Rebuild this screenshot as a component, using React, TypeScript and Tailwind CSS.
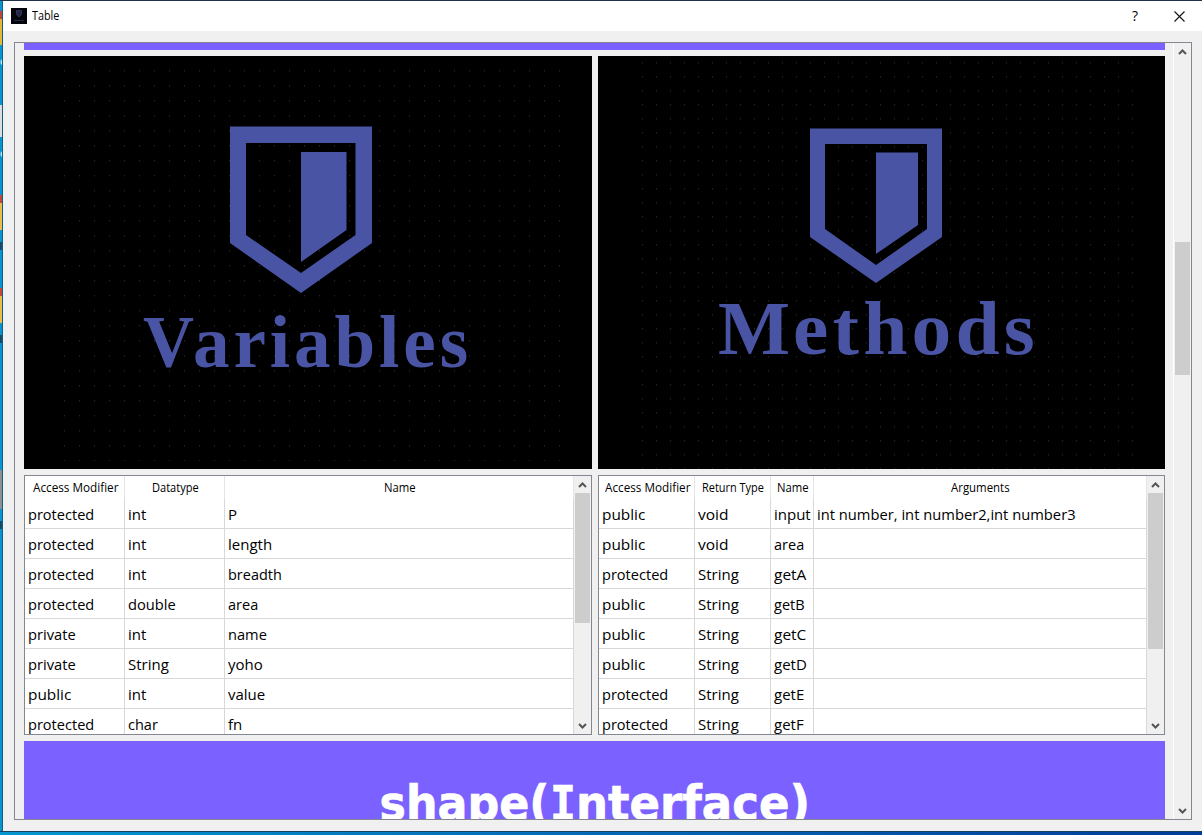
import React from "react";

const variables = [
  ["protected", "int", "P"],
  ["protected", "int", "length"],
  ["protected", "int", "breadth"],
  ["protected", "double", "area"],
  ["private", "int", "name"],
  ["private", "String", "yoho"],
  ["public", "int", "value"],
  ["protected", "char", "fn"],
];

const methods = [
  ["public", "void", "input", "int number, int number2,int number3"],
  ["public", "void", "area", ""],
  ["protected", "String", "getA", ""],
  ["public", "String", "getB", ""],
  ["public", "String", "getC", ""],
  ["public", "String", "getD", ""],
  ["protected", "String", "getE", ""],
  ["protected", "String", "getF", ""],
];

const cellWidths: Record<string, number> = {
  protected: 66, private: 48, public: 43, int: 18, double: 48, String: 41, char: 30,
  P: 9, length: 44, breadth: 54, area: 30, name: 39, yoho: 35, value: 37, fn: 14,
  void: 30, input: 37, getA: 32, getB: 31, getC: 32, getD: 33, getE: 30, getF: 30,
  "int number, int number2,int number3": 259,
};

function Arrow({ down = false }: { down?: boolean }) {
  return (
    <svg width="9" height="6" viewBox="0 0 9 6" className={down ? "rotate-180" : ""}>
      <path d="M1 5 L4.5 1.5 L8 5" fill="none" stroke="#555" strokeWidth="2" />
    </svg>
  );
}

function ScrollBar({ thumb }: { thumb: string }) {
  return (
    <div className="flex w-[17px] shrink-0 flex-col items-center bg-[#f0f0f0]">
      <div className="flex h-[17px] shrink-0 items-center justify-center"><Arrow /></div>
      <div className={"w-[15px] shrink-0 bg-[#cdcdcd] " + thumb} />
      <div className="flex-1" />
      <div className="flex h-[17px] shrink-0 items-center justify-center"><Arrow down /></div>
    </div>
  );
}

function Label({ text, width, size }: { text: string; width: number; size: number }) {
  const ref = React.useRef<HTMLSpanElement>(null);
  const [scale, setScale] = React.useState(1);
  React.useLayoutEffect(() => {
    if (ref.current) setScale(width / ref.current.offsetWidth);
  }, [width]);
  return (
    <span className="block whitespace-nowrap leading-none text-black" style={{ width, fontSize: size }}>
      <span ref={ref} className="inline-block origin-left" style={{ transform: `scaleX(${scale})` }}>{text}</span>
    </span>
  );
}

type TableProps = {
  heads: string[];
  headWidths: number[];
  rows: string[][];
  cols: string;
  thumb: string;
};

function Table({ heads, headWidths, rows, cols, thumb }: TableProps) {
  return (
    <div className="flex h-[260px] overflow-hidden border border-[#828790] bg-white">
      <div className="min-w-0 flex-1">
        <div className={"grid h-[23px] " + cols}>
          {heads.map((h, i) => (
            <div key={h} className="flex items-center justify-center border-r border-[#e5e5e5] pl-px">
              <Label text={h} width={headWidths[i]} size={12} />
            </div>
          ))}
        </div>
        {rows.map((r, i) => (
          <div key={i} className={"grid h-[30px] " + cols}>
            {r.map((c, j) => (
              <div key={j} className="flex items-center border-r border-b border-[#d8d8d8] pt-0.5 pl-[3px]">
                {c && <Label text={c} width={cellWidths[c]} size={15} />}
              </div>
            ))}
          </div>
        ))}
      </div>
      <ScrollBar thumb={thumb} />
    </div>
  );
}

type Run = { s: string; x: number; w: number; spacing: number };

type PosterProps = {
  id: string;
  shield: string;
  runs: Run[];
  baseline: number;
  size: number;
  dots: { x: number; y: number; w: number; h: number; step: number };
};

function Poster({ id, shield, runs, baseline, size, dots }: PosterProps) {
  return (
    <svg className="block h-[413px] w-full bg-black" viewBox="0 0 568 413" preserveAspectRatio="xMinYMin slice">
      <defs>
        <pattern id={id} x={dots.x} y={dots.y} width={dots.step} height={dots.step} patternUnits="userSpaceOnUse">
          <rect width="1" height="1.4" fill="#262626" />
        </pattern>
      </defs>
      <rect x={dots.x} y={dots.y} width={dots.w} height={dots.h} fill={`url(#${id})`} />
      <path d={shield} fill="#4a54a4" fillRule="evenodd" />
      {runs.map((r) => (
        <text
          key={r.s}
          x={r.x}
          y={baseline}
          textLength={r.w}
          lengthAdjust="spacingAndGlyphs"
          letterSpacing={r.spacing}
          fontSize={size}
          fill="#4a54a4"
          className="font-['Liberation_Serif',serif] font-bold"
        >
          {r.s}
        </text>
      ))}
    </svg>
  );
}

function Banner() {
  return (
    <svg width="440" height="90" viewBox="0 0 440 90" className="overflow-visible font-['DejaVu_Sans',sans-serif] font-bold">
      <g fill="white" stroke="white" strokeWidth="0.7" fontSize="48">
        <text x="4.5" y="50" textLength="170" lengthAdjust="spacingAndGlyphs">shape(</text>
        <text x="175" y="50" textLength="26" lengthAdjust="spacingAndGlyphs" className="font-['DejaVu_Sans_Mono',monospace]">I</text>
        <text x="201" y="50" textLength="234" lengthAdjust="spacingAndGlyphs">nterface)</text>
      </g>
    </svg>
  );
}

export default function App() {
  return (
    <div className="flex h-[835px] w-[1202px] flex-col overflow-hidden bg-[#0079b8] font-['Open_Sans','Noto_Sans',sans-serif]">
      <div className="h-px bg-[#22324d]" />
      <div className="flex h-[830px]">
        <div className="flex w-[3px] shrink-0 flex-col overflow-hidden border-r border-[#145f80] bg-[#0795d1]">
          <div className="mt-2.5 h-2 bg-[#b84838]" />
          <div className="h-[26px] bg-[#e6b637]" />
          <div className="mt-3 h-2 text-[10px] leading-[8px] text-white">e</div>
          <div className="mt-[40px] h-[32px] bg-[#dddddd]" />
          <div className="mt-3 h-2 text-[10px] leading-[8px] text-white">e</div>
          <div className="mt-[38px] h-2 bg-[#c2483c]" />
          <div className="h-[27px] bg-[#e8bd4c]" />
          <div className="mt-3 h-2 bg-[#174a69]" />
          <div className="mt-[38px] h-2 bg-[#c2483c]" />
          <div className="h-[27px] bg-[#e8bd4c]" />
          <div className="mt-3 h-2 bg-[#174a69]" />
          <div className="mt-[127px] h-[39px] bg-[#909090]" />
          <div className="mt-3 h-2 bg-[#174a69]" />
        </div>
        <div className="flex min-w-0 flex-1 flex-col bg-[#f0f0f0]">
          <div className="flex h-[30px] shrink-0 items-center bg-white pl-2">
            <svg width="16" height="16" viewBox="0 0 16 16">
              <rect width="16" height="16" fill="#05050c" />
              <path d="M5.5 2.5h5v4L8 9 5.500 6.500Z" fill="#252545" stroke="#303463" />
              <path d="M3 12.500h10" stroke="#28284b" />
            </svg>
            <div className="ml-[5px]"><Label text="Table" width={27} size={12} /></div>
            <div className="ml-auto mr-[36px] text-[14px] leading-none text-black">?</div>
            <svg className="mr-[17px]" width="11" height="11" viewBox="0 0 11 11">
              <path d="M.5 .5 L10.500 10.500 M10.500 .5 L.5 10.500" stroke="#111" strokeWidth="1.1" />
            </svg>
          </div>
          <div className="ml-[11px] mt-[11px] flex h-[778px] w-[1178px] shrink-0 overflow-hidden border border-[#828790]">
            <div className="ml-[9px] flex w-[1141px] shrink-0 flex-col">
              <div className="h-[7px] shrink-0 bg-[#7b61ff]" />
              <div className="mt-1.5 grid shrink-0 grid-cols-[568px_567px] gap-1.5">
                <Poster
                  id="dotsVariables"
                  shield="M206 70.500H348V187L277 237 206 187ZM222 87V179L277 217 331.500 179V87ZM277 96H322.500V174L277 206Z"
                  runs={[
                    { s: "V", x: 119, w: 51, spacing: 0 },
                    { s: "ariables", x: 169, w: 279, spacing: 4 },
                  ]}
                  baseline={311}
                  size={75}
                  dots={{ x: 40, y: 14, w: 497, h: 391, step: 15 }}
                />
                <Poster
                  id="dotsMethods"
                  shield="M212 72.500H344V181L278 227 212 181ZM227 88V173L278 209 329 173V88ZM278 96.500H320V169L278 198Z"
                  runs={[
                    { s: "M", x: 120, w: 72, spacing: 0 },
                    { s: "ethods", x: 195, w: 246, spacing: 4 },
                  ]}
                  baseline={298}
                  size={76}
                  dots={{ x: 44, y: 6, w: 492, h: 407, step: 14 }}
                />
                <Table
                  heads={["Access Modifier", "Datatype", "Name"]}
                  headWidths={[85, 47, 32]}
                  rows={variables}
                  cols="grid-cols-[100px_100px_349px]"
                  thumb="h-[130px]"
                />
                <Table
                  heads={["Access Modifier", "Return Type", "Name", "Arguments"]}
                  headWidths={[85, 62, 32, 59]}
                  rows={methods}
                  cols="grid-cols-[96px_76px_43px_333px]"
                  thumb="h-[156px]"
                />
              </div>
              <div className="mt-1.5 flex h-[150px] shrink-0 justify-center bg-[#7b61ff] pt-[29px]">
                <Banner />
              </div>
            </div>
            <div className="ml-auto flex w-[18px] shrink-0 flex-col items-center border-l border-white bg-[#f0f0f0]">
              <div className="flex h-[17px] items-center"><Arrow /></div>
              <div className="mt-[182px] h-[133px] w-[15px] bg-[#cdcdcd]" />
              <div className="mt-auto flex h-[17px] items-center"><Arrow down /></div>
            </div>
          </div>
        </div>
      </div>
      <div className="h-1 border-t border-[#17415c] bg-linear-to-r from-[#0795d1] to-[#003c9c]" />
    </div>
  );
}
